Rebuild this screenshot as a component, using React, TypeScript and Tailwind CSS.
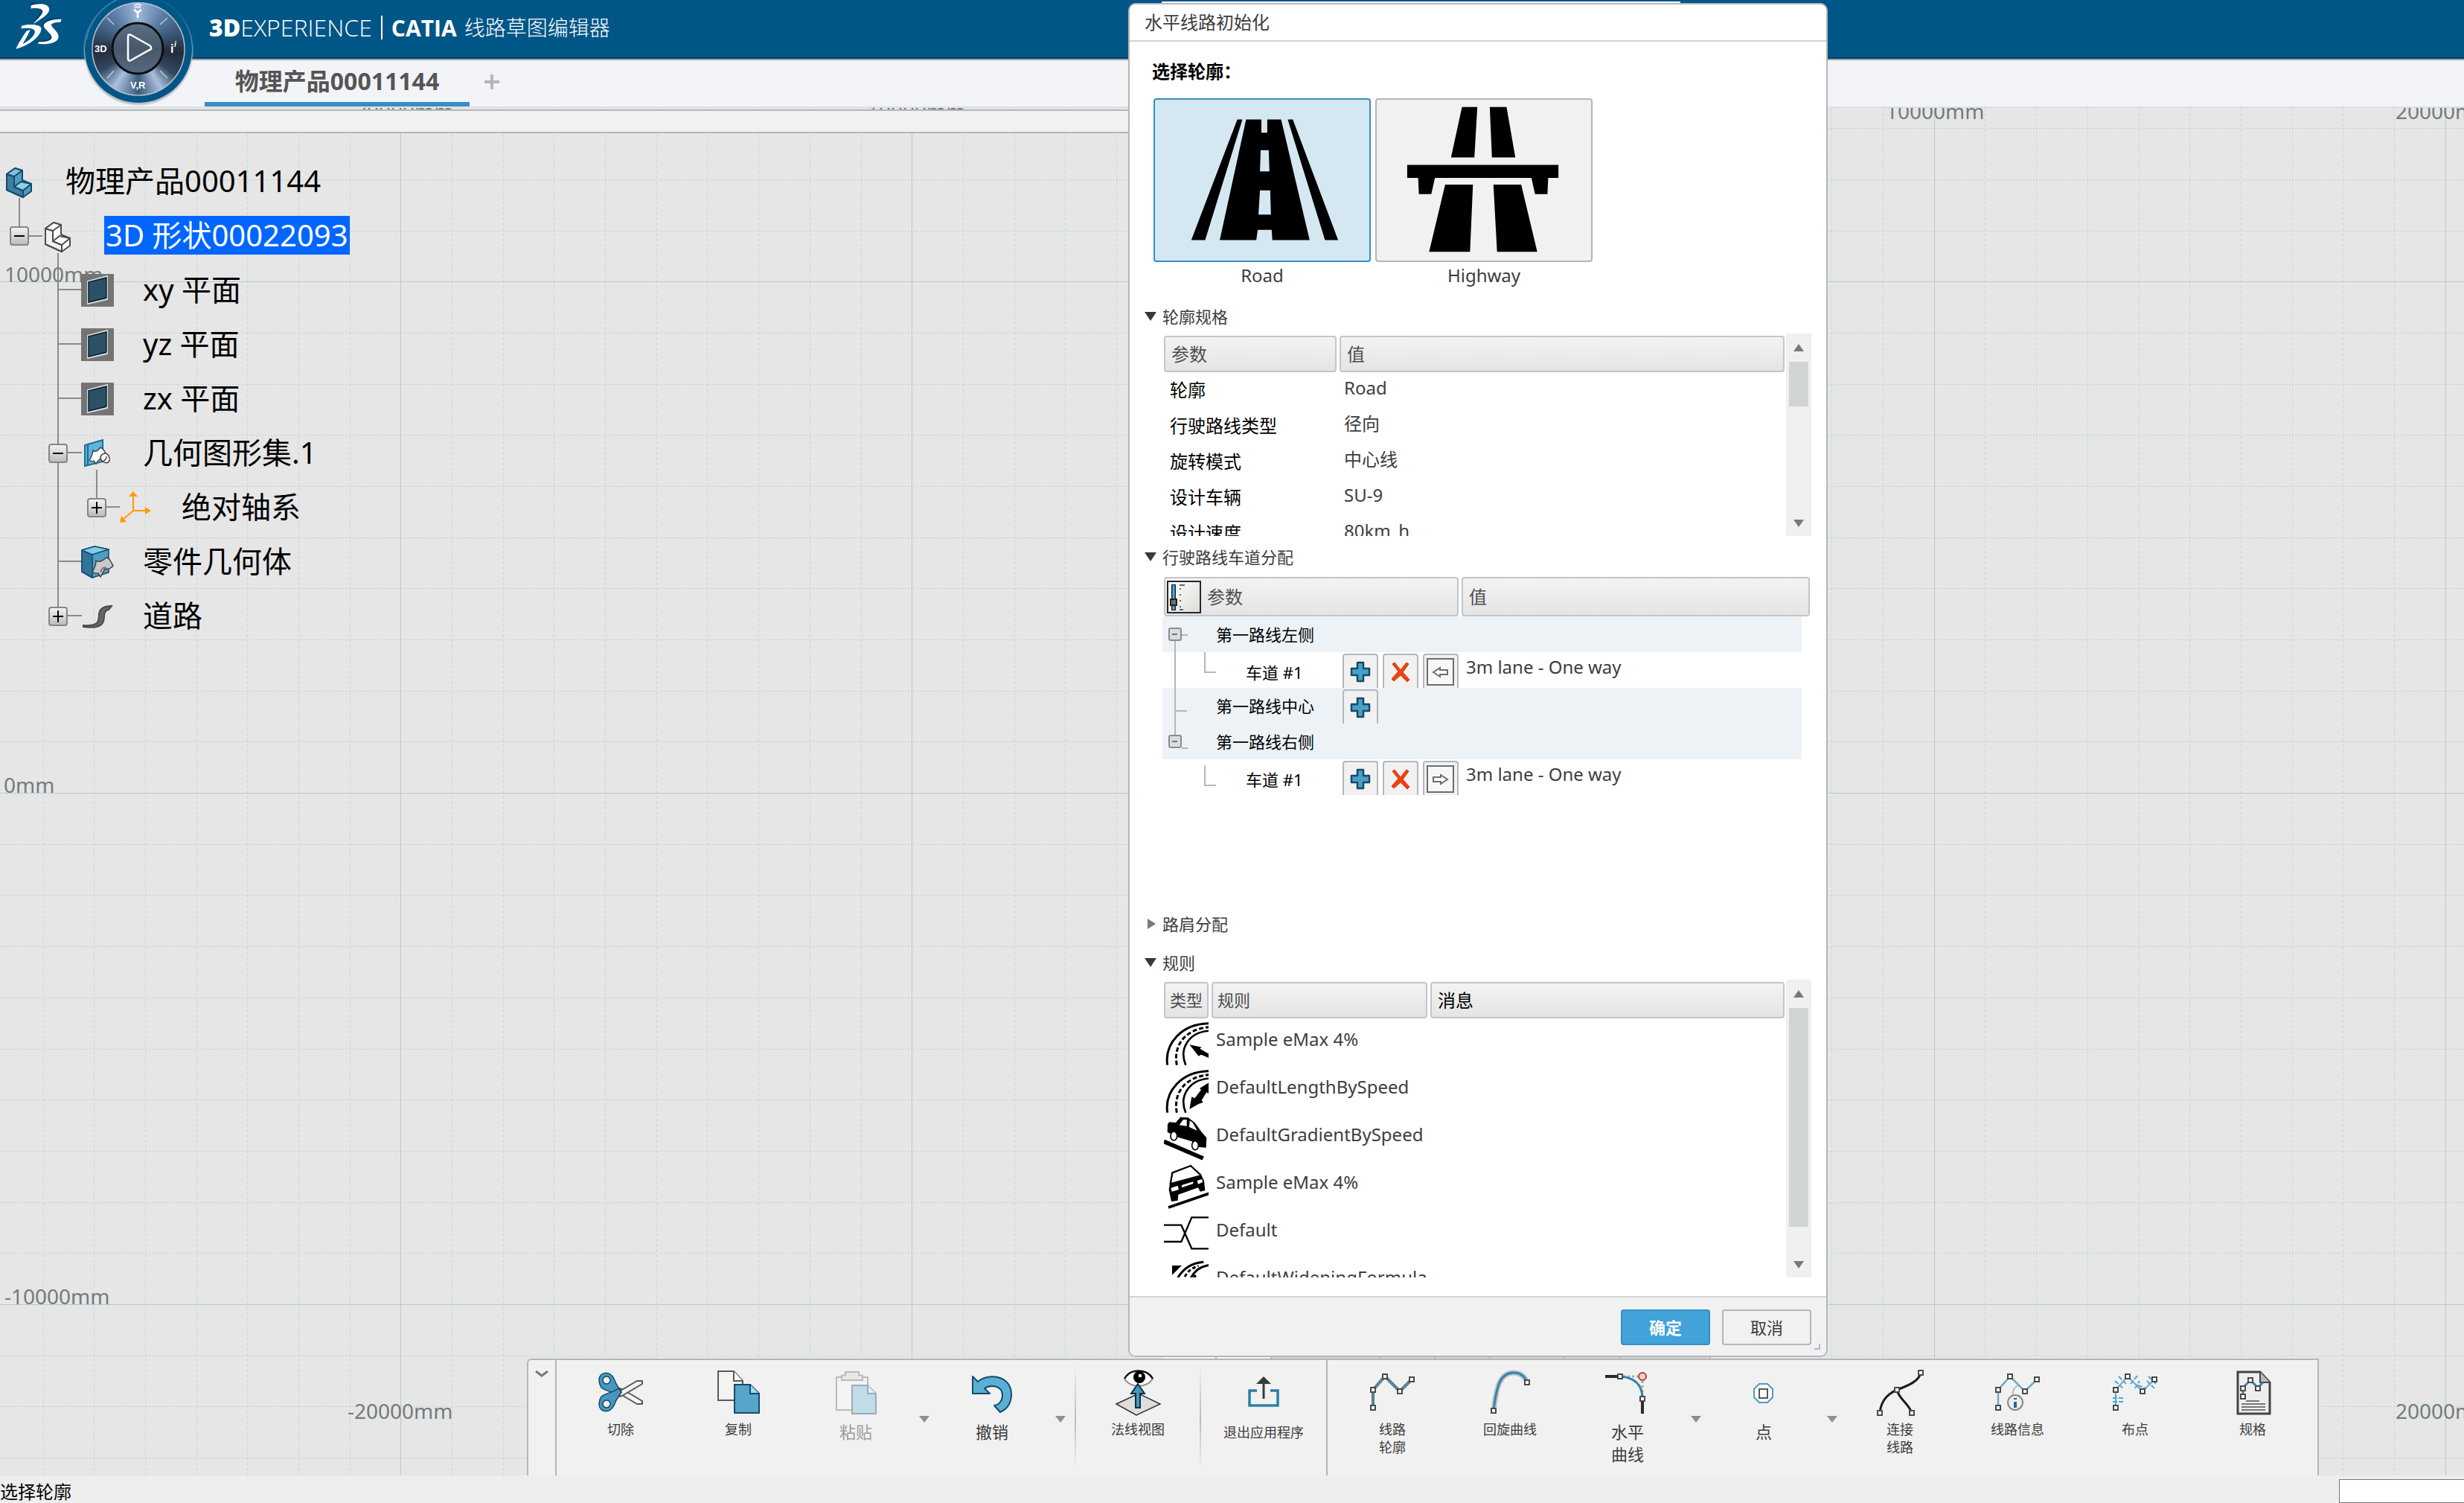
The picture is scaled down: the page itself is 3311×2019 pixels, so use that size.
import type { ReactNode } from "react";

const FONT = "font-['Noto_Sans','Noto_Sans_CJK_SC',sans-serif]";

/* ---------- Drawing sheet grid ---------- */

const GRID_STEP = 68.68;
const V_ORIGIN = 538.4;
const H_ORIGIN = 233.3;

function SheetGrid() {
  const vertical = Array.from({ length: 49 }, (_, i) => i - 7);
  const horizontal = Array.from({ length: 30 }, (_, i) => i - 3);
  const labels = [
    { x: 468, y: 15, t: "-20000mm" },
    { x: 1156, y: 15, t: "-10000mm" },
    { x: 2534, y: 15, t: "10000mm" },
    { x: 3219, y: 15, t: "20000mm" },
    { x: 6, y: 234, t: "10000mm" },
    { x: 5, y: 920, t: "0mm" },
    { x: 6, y: 1607, t: "-10000mm" },
    { x: 467, y: 1761, t: "-20000mm" },
    { x: 3219, y: 1761, t: "20000mm" },
  ];
  return (
    <svg className="absolute inset-0 h-full w-full" aria-hidden="true">
      <g shapeRendering="crispEdges" strokeWidth="1">
        {vertical.map((k) => {
          const x = Math.round(V_ORIGIN + k * GRID_STEP) + 0.5;
          const major = k % 10 === 0;
          return <line key={k} x1={x} x2={x} y1="0" y2="100%" stroke={major ? "#b7cad0" : "#c6d8da"} strokeDasharray={major ? undefined : "4 3"} />;
        })}
        {horizontal.map((k) => {
          const y = Math.round(H_ORIGIN + k * GRID_STEP) + 0.5;
          const major = k % 10 === 0;
          return <line key={k} x1="0" x2="100%" y1={y} y2={y} stroke={major ? "#b7cad0" : "#bcd2d5"} strokeDasharray={major ? undefined : "2 2"} />;
        })}
      </g>
      <g fill="#717c7d" fontSize="28" className={FONT}>
        {labels.map((l, i) => (
          <text key={i} x={l.x} y={l.y}>{l.t}</text>
        ))}
      </g>
    </svg>
  );
}

/* ---------- Header ---------- */

function DsLogo() {
  return (
    <svg viewBox="60 15 190 190" className="size-16" aria-label="Dassault Systèmes" role="img">
      <g fill="#00365a" transform="translate(-4 -4)">
        <path d="M124 25C150 16 192 14 197 38C200 60 160 82 133 98C150 78 174 60 170 46C166 35 145 35 124 37Z" />
        <path d="M245 80L243 91C225 92 212 95 204 101C212 120 236 130 234 152C230 177 180 182 151 177L155 170C180 171 206 166 207 153C207 136 178 122 175 107C175 88 215 79 245 80Z" />
      </g>
      <g fill="#fff">
        <path d="M124 25C150 16 192 14 197 38C200 60 160 82 133 98C150 78 174 60 170 46C166 35 145 35 124 37Z" />
        <path fillRule="evenodd" d="M87 106C115 98 162 100 165 116C167 145 120 184 64 198C74 176 92 146 107 126L122 122C112 142 99 166 91 179C116 166 140 145 140 129C138 116 113 113 85 117Z" />
        <path d="M245 80L243 91C225 92 212 95 204 101C212 120 236 130 234 152C230 177 180 182 151 177L155 170C180 171 206 166 207 153C207 136 178 122 175 107C175 88 215 79 245 80Z" />
      </g>
    </svg>
  );
}

function Compass() {
  return (
    <div className="absolute left-[105px] top-0 z-10 size-[160px] overflow-hidden">
      <div className="absolute left-[18px] top-[3px] size-[126px] rounded-full bg-[conic-gradient(from_0deg,#9db7d8,#5c7ea6_35deg,#3b5878_65deg,#232c3a_95deg,#33475f_125deg,#a9c0e0_150deg,#3c5a7c_180deg,#a9c0e0_212deg,#33475f_240deg,#232c3a_268deg,#3b5878_295deg,#5c7ea6_325deg,#9db7d8_360deg)] [box-shadow:0_0_0_9px_#005686,0_2px_2px_10px_#b9bcc0]" />
      <svg viewBox="0 0 160 160" className="absolute inset-0 size-full" aria-hidden="true">
        <defs>
          <linearGradient id="play" x1="0" y1="0" x2="0" y2="1">
            <stop offset="0" stopColor="#5b7086" />
            <stop offset=".5" stopColor="#47586a" />
            <stop offset="1" stopColor="#55697f" />
          </linearGradient>
        </defs>
        <path d="M11 54A71 71 0 0 1 52 0" fill="none" stroke="#2f7ba6" strokeWidth="2" />
        <circle cx="81" cy="66" r="62" fill="none" stroke="#aebfd2" strokeWidth="1.5" />
        <circle cx="80" cy="65" r="34" fill="url(#play)" stroke="#0b0e12" strokeWidth="3" />
        <path d="M67 49C67 46 69 46 71 47L96 61C99 63 99 66 96 67L71 81C69 82 67 82 67 79Z" fill="none" stroke="#fff" strokeWidth="2.5" />
        <g stroke="#c5d2e0" strokeWidth="1.3">
          <path d="M39 24L48 33M120 24L110 33M39 105L48 95M120 105L110 95" />
        </g>
        <g stroke="#fff" fill="none">
          <path d="M80 24V17L75 13M80 17L85 13" strokeWidth="2.5" />
          <path d="M76 11Q80 7 84 11M75 8Q80 3 85 8" strokeWidth="1.4" />
        </g>
        <g fill="#fff" fontWeight="700" className="font-['Liberation_Sans',sans-serif]">
          <text x="22" y="70" fontSize="13">3D</text>
          <text x="70" y="119" fontSize="13">V,R</text>
          <text x="124" y="71" fontSize="16">i</text>
          <text x="129" y="63" fontSize="10" fontStyle="italic">i</text>
        </g>
      </svg>
    </div>
  );
}

/* ---------- Specification tree ---------- */

const STEEL_DARK = "#174a68";

function StairIcon({ light = false }: { light?: boolean }) {
  const s = light ? "#4c4c4c" : STEEL_DARK;
  return (
    <svg viewBox="0 0 44 44" className="size-11" aria-hidden="true">
      <g stroke={s} strokeWidth="2" strokeLinejoin="round">
        <path d="M4 12L15 4L25 7V20L37 25V35L26 43L4 33Z" fill={light ? "#fff" : "#4f9cc0"} />
        <path d="M4 12L14 15V29L26 34V43L4 33Z" fill={light ? "#f1f1f1" : "#3a7fa5"} />
        <path d="M4 12L15 4L25 7L14 15Z" fill={light ? "#fff" : "#7cc3e2"} />
        <path d="M14 29L23 22L37 25L26 34Z" fill={light ? "#fff" : "#8dd0ec"} />
      </g>
    </svg>
  );
}

function PlaneIcon() {
  return (
    <svg viewBox="0 0 44 44" className="size-11" aria-hidden="true">
      <rect width="44" height="44" fill="#747474" />
      <path d="M9 10L35 3V34L9 40Z" fill="#2f5468" stroke="#d7dee2" strokeWidth="2" />
      <path d="M10 11L34 5V32L10 38Z" fill="#2c5166" stroke="#0d2230" strokeWidth="1.5" />
    </svg>
  );
}

function GeoSetIcon() {
  return (
    <svg viewBox="0 0 44 44" className="size-11" aria-hidden="true">
      <path d="M5 11L29 4V33L5 39Z" fill="#5db6dc" stroke="#1f6c92" strokeWidth="2" />
      <path d="M9 10V37" stroke="#1f6c92" strokeWidth="2" />
      <path d="M16 18Q20 22 26 14L30 17L33 22Q39 24 38 32Q35 37 29 33L26 29Q22 32 20 36L17 32Q14 34 11 31Q15 26 16 18Z" fill="#fff" stroke="#444" strokeWidth="1.5" />
      <path d="M26 29Q26 22 33 22M29 33Q34 31 34 26" fill="none" stroke="#444" strokeWidth="1.5" />
    </svg>
  );
}

function AxisIcon() {
  return (
    <svg viewBox="0 0 44 44" className="size-11" aria-hidden="true">
      <path d="M18 4V26H36M18 26L4 38" fill="none" stroke="#ff9b05" strokeWidth="2" />
      <path d="M12 7L18 0L24 7ZM34 21L42 26L34 31ZM2 33L9 41L0 42Z" fill="#ff9b05" />
    </svg>
  );
}

function BodyIcon() {
  return (
    <svg viewBox="0 0 44 44" className="size-11" aria-hidden="true">
      <g stroke={STEEL_DARK} strokeWidth="1.5" strokeLinejoin="round">
        <path d="M1 6L18 1L37 5V36L15 43L1 35Z" fill="#4f9dc3" />
        <path d="M1 6L15 12V43L1 35Z" fill="#317399" />
        <path d="M1 6L18 1L37 5L15 12Z" fill="#7fcbec" />
      </g>
      <path d="M20 20Q25 24 34 16L38 18L43 27Q38 33 32 31L26 42L23 37Q19 38 15 35Q20 28 20 20Z" fill="#c9c9c9" stroke="#444" strokeWidth="1.5" />
      <path d="M26 36Q28 28 34 30" fill="none" stroke="#777" strokeWidth="2" />
    </svg>
  );
}

function RoadIcon() {
  return (
    <svg viewBox="0 0 44 44" className="size-11" aria-hidden="true">
      <path d="M3 34Q15 35 21 31Q24 28 24 19Q25 8 41 8L37 13Q31 14 31 22Q31 32 24 35Q16 38 3 36Z" fill="#666" stroke="#4a4a4a" strokeWidth="2" />
    </svg>
  );
}

function Toggle({ open }: { open: boolean }) {
  return (
    <button type="button" aria-label={open ? "折叠" : "展开"} className="size-[26px] rounded-[4px] border-2 border-[#868686] bg-linear-to-b from-[#f2f2f2] to-[#bdbdbd]">
      <svg viewBox="0 0 22 22" className="size-full" aria-hidden="true">
        <path d={open ? "M4 11H18" : "M4 11H18M11 3V19"} stroke="#000" strokeWidth="2" />
      </svg>
    </button>
  );
}

type Node = { level: 0 | 1 | 2 | 3; label: string; icon: ReactNode; open?: boolean; selected?: boolean };

const nodes: Node[] = [
  { level: 0, label: "物理产品00011144", icon: <StairIcon /> },
  { level: 1, label: "3D 形状00022093", icon: <StairIcon light />, open: true, selected: true },
  { level: 2, label: "xy 平面", icon: <PlaneIcon /> },
  { level: 2, label: "yz 平面", icon: <PlaneIcon /> },
  { level: 2, label: "zx 平面", icon: <PlaneIcon /> },
  { level: 2, label: "几何图形集.1", icon: <GeoSetIcon />, open: true },
  { level: 3, label: "绝对轴系", icon: <AxisIcon />, open: false },
  { level: 2, label: "零件几何体", icon: <BodyIcon /> },
  { level: 2, label: "道路", icon: <RoadIcon />, open: false },
];

const INDENT = { 0: "pl-[5px]", 1: "pl-[13px]", 2: "pl-[65px]", 3: "pl-[117px]" };

function SpecTree() {
  return (
    <nav aria-label="结构树" className="relative mt-7 w-fit">
      <svg className="absolute left-0 top-0 h-full w-full" aria-hidden="true">
        <path
          d="M26 59V110H57M78 133V620M78 182H110M78 255H110M78 328H110M78 401H110M130 424V474H161M78 547H110M78 401V620H110"
          fill="none" stroke="#8a8a8a" strokeWidth="2" shapeRendering="crispEdges"
        />
      </svg>
      <ul className="relative">
        {nodes.map((n) => (
          <li key={n.label} className={`flex h-[73px] items-center ${INDENT[n.level]}`}>
            {n.level > 0 && <span className="flex w-11 shrink-0">{n.open !== undefined && <Toggle open={n.open} />}</span>}
            <span className="shrink-0">{n.icon}</span>
            <span className="pb-[2px] pl-[39px] text-[40px] leading-[52px]">
              <span className={n.selected ? "block bg-[#0066ff] px-[2px] text-white" : "block text-black"}>{n.label}</span>
            </span>
          </li>
        ))}
      </ul>
    </nav>
  );
}

/* ---------- Dialog parts ---------- */

function ScrollBar({ thumb }: { thumb: string }) {
  return (
    <div className="flex w-[34px] shrink-0 flex-col items-center bg-[#f0f0f0]" aria-hidden="true">
      <svg viewBox="0 0 14 10" className="my-[14px] h-[10px] w-[14px]"><path d="M7 0L14 10H0Z" fill="#77797c" /></svg>
      <div className={`w-[26px] bg-[#d1d4d4] ${thumb}`} />
      <svg viewBox="0 0 14 10" className="mt-auto mb-3 h-[10px] w-[14px]"><path d="M0 0H14L7 10Z" fill="#77797c" /></svg>
    </div>
  );
}

function SectionTitle({ children, open = true }: { children: ReactNode; open?: boolean }) {
  return (
    <button type="button" aria-expanded={open} className="flex h-11 w-full items-center pb-[2px] pl-5 text-left text-[22px] leading-[30px] text-[#3d3d3d]">
      <svg viewBox="0 0 16 14" className="mr-2 h-[14px] w-4" aria-hidden="true">
        {open ? <path d="M0 1H16L8 13Z" fill="#36393d" /> : <path d="M4 0L15 7L4 14Z" fill="#77797c" />}
      </svg>
      {children}
    </button>
  );
}

function HeadCell({ children, big = false, small = false, dark = false, colSpan }: { children: ReactNode; big?: boolean; small?: boolean; dark?: boolean; colSpan?: number }) {
  return (
    <th scope="col" colSpan={colSpan} className={`px-[2px] pt-[3px] pb-0 text-left font-normal ${big ? "h-14" : "h-[52px]"}`}>
      <div className={`flex items-center rounded-[4px] border-2 border-[#c4c5c8] bg-linear-to-b from-[#f3f3f3] to-[#e4e4e4] whitespace-nowrap ${big ? "h-[53px]" : "h-[49px]"} ${small ? "pl-[6px] text-[22px]" : "pl-2 text-[24px]"} ${dark ? "text-black" : "text-[#4d4d4d]"}`}>
        {children}
      </div>
    </th>
  );
}

function RoadPicture() {
  return (
    <svg viewBox="0 0 292 220" className="size-full" aria-hidden="true">
      <path d="M112 27H119L68 192H49ZM181 27H188L250 192H232Z" />
      <path fillRule="evenodd" d="M124 27H145V45H153V27H172L211 192H160L159 178H140L138 192H88ZM144 69L143 98H156L155 69ZM143 124L141 157H158L157 124Z" />
    </svg>
  );
}

function HighwayPicture() {
  return (
    <svg viewBox="0 0 292 220" className="size-full" aria-hidden="true">
      <path d="M116 10H137L133 79H101ZM154 10H177L189 79H157Z" />
      <path d="M41 89H248V107H234L233 129H216L211 107H79L74 129H57L56 107H41Z" />
      <path d="M93 116H131L127 208H71ZM159 116H197L219 208H164Z" />
    </svg>
  );
}

function ProfileCard({ label, selected = false, children }: { label: string; selected?: boolean; children: ReactNode }) {
  return (
    <label className="flex flex-col items-center text-[24px] leading-9 text-[#3d3d3d]">
      <button type="button" aria-pressed={selected} aria-label={label} className={`h-[220px] w-[292px] rounded-[4px] border-2 ${selected ? "border-[#368ec4] bg-[#d5e8f2]" : "border-[#b4b6ba] bg-[#f1f1f1]"}`}>
        {children}
      </button>
      {label}
    </label>
  );
}

const params = [
  ["轮廓", "Road"],
  ["行驶路线类型", "径向"],
  ["旋转模式", "中心线"],
  ["设计车辆", "SU-9"],
  ["设计速度", "80km_h"],
];

function ParamTable() {
  return (
    <div className="ml-11 mr-5 flex h-[272px] overflow-hidden">
      <table className="flex-1 table-fixed border-separate border-spacing-0 text-[24px] leading-9">
        <colgroup><col className="w-[236px]" /><col /></colgroup>
        <thead><tr><HeadCell>参数</HeadCell><HeadCell>值</HeadCell></tr></thead>
        <tbody>
          {params.map(([k, v]) => (
            <tr key={k}>
              <td className="h-12 p-0 pl-[10px] text-black">{k}</td>
              <td className="h-12 p-0 pb-[6px] pl-2 text-[#3d3d3d]">{v}</td>
            </tr>
          ))}
        </tbody>
      </table>
      <ScrollBar thumb="h-[60px]" />
    </div>
  );
}

function PlusGlyph() {
  return (
    <svg viewBox="0 0 44 44" className="size-11" aria-hidden="true">
      <path d="M18 10H26V18H34V27H26V35H18V27H10V18H18Z" fill="#4aa0c6" stroke={STEEL_DARK} strokeWidth="2.5" strokeLinejoin="round" />
    </svg>
  );
}

function CrossGlyph() {
  return (
    <svg viewBox="0 0 44 44" className="size-11" aria-hidden="true">
      <path d="M11 12L14 10L22 20L30 10L33 12L25 23L34 33L31 36L22 27L13 35L10 32L19 22Z" fill="#f0420e" stroke="#d8320a" strokeWidth="1" />
    </svg>
  );
}

function LaneArrow({ right = false }: { right?: boolean }) {
  return (
    <svg viewBox="0 0 44 44" className="size-11" aria-hidden="true">
      <rect x="4" y="5" width="35" height="35" fill="#f6f7f7" stroke="#6a6d71" strokeWidth="2" />
      <path d={right ? "M12 20H22V17L31 23L22 29V26H12Z" : "M31 20H21V17L12 23L21 29V26H31Z"} fill="#fff" stroke="#6a6d71" strokeWidth="2" />
    </svg>
  );
}

function LaneButton({ label, children }: { label: string; children: ReactNode }) {
  return (
    <button type="button" aria-label={label} className="flex h-[46px] w-12 justify-center rounded-t-[4px] border-2 border-b-0 border-[#b4b6ba] bg-[#f1f1f1]">
      {children}
    </button>
  );
}

type LaneRow = { label: string; lines: string; box?: boolean; add?: boolean; lane?: "left" | "right" };

const laneRows: LaneRow[] = [
  { label: "第一路线左侧", lines: "M17 33V48M26 25H34", box: true },
  { label: "车道 #1", lines: "M17 0V48M57 0V27H72", lane: "left" },
  { label: "第一路线中心", lines: "M17 0V48M17 31H33", add: true },
  { label: "第一路线右侧", lines: "M17 0V15M26 33H34", box: true },
  { label: "车道 #1", lines: "M57 8V35H72", lane: "right" },
];

function LaneTable() {
  return (
    <div className="ml-11 mr-5 mt-px h-[448px]">
      <table className="w-full table-fixed border-separate border-spacing-0">
        <colgroup><col className="w-[400px]" /><col /><col className="w-[13px]" /></colgroup>
        <thead>
          <tr>
            <HeadCell big>
              <button type="button" aria-label="滑块" className="-ml-[6px] mr-2 h-11 w-[46px] border-2 border-[#26282b] bg-linear-to-br from-white to-[#dcdcd8]">
                <svg viewBox="0 0 42 40" className="size-full" aria-hidden="true">
                  <path d="M7 3V38" stroke="#123" strokeWidth="6" /><path d="M7 4V37" stroke="#4db1de" strokeWidth="3" />
                  <rect x="3" y="23" width="8" height="8" fill="#6d6d6d" stroke="#222" strokeWidth="2" />
                  <path d="M16 8V35" stroke="#666" strokeWidth="2" strokeDasharray="2 6" />
                  <path d="M15 4H22M15 37H20" stroke="#666" strokeWidth="2" />
                </svg>
              </button>
              参数
            </HeadCell>
            <HeadCell big colSpan={2}>值</HeadCell>
          </tr>
        </thead>
        <tbody>
          {laneRows.map((r, i) => {
            const bg = r.lane ? "" : "bg-[#edf2f6]";
            return (
              <tr key={i}>
                <td className={`h-12 p-0 ${bg}`}>
                  <div className="flex h-12 items-center text-[22px] leading-8 text-black">
                    <svg viewBox="0 0 72 48" className="h-12 w-[72px] shrink-0" aria-hidden="true">
                      {r.box && <rect x="9" y="16" width="16" height="16" rx="2" fill="#dcdcde" stroke="#8a8c90" strokeWidth="2" />}
                      {r.box && <path d="M13 24H20" stroke="#777" strokeWidth="2" />}
                      <path d={r.lines} fill="none" stroke="#b4b6ba" strokeWidth="2" />
                    </svg>
                    <span className={r.lane ? "flex-1 pl-10 pt-[6px]" : "flex-1"}>{r.label}</span>
                    <div className="mr-[2px] flex h-full w-[156px] items-end gap-[6px]">
                      {(r.lane || r.add) && <LaneButton label="添加"><PlusGlyph /></LaneButton>}
                      {r.lane && <LaneButton label="删除"><CrossGlyph /></LaneButton>}
                      {r.lane && <LaneButton label="方向"><LaneArrow right={r.lane === "right"} /></LaneButton>}
                    </div>
                  </div>
                </td>
                <td className={`h-12 p-0 pb-2 pl-2 text-[24px] leading-9 text-[#3d3d3d] ${bg}`}>{r.lane && "3m lane - One way"}</td>
                <td className="p-0" />
              </tr>
            );
          })}
        </tbody>
      </table>
    </div>
  );
}

function CurvedRoad({ children }: { children?: ReactNode }) {
  return (
    <g fill="none" stroke="#000">
      <path d="M14 176C2 90 70 10 182 8" strokeWidth="9" />
      <path d="M88 176C60 110 100 44 182 38" strokeWidth="8" />
      <path d="M52 176C38 100 80 33 182 23" strokeWidth="9" strokeDasharray="18 9" />
      {children}
    </g>
  );
}

const ruleIcons: ReactNode[] = [
  <CurvedRoad><path d="M103 94L152 104L145 110L182 132V148L150 134L140 140Z" fill="#000" stroke="none" /></CurvedRoad>,
  <CurvedRoad><path d="M182 54V100L172 94L152 126L158 134L138 142L103 162L112 112L124 118L150 84L144 78Z" fill="#000" stroke="none" /></CurvedRoad>,
  <g>
    <path d="M15 30L22 22L48 24L66 2L98 4L125 25L152 62L172 85L170 125L138 122L113 100L53 82L14 62Z" />
    <path d="M62 34L78 12H92L92 38ZM104 16L116 24L134 56L102 42Z" fill="#fff" />
    <ellipse cx="40" cy="78" rx="13" ry="18" fill="#fff" stroke="#000" strokeWidth="5" />
    <ellipse cx="126" cy="116" rx="13" ry="18" fill="#fff" stroke="#000" strokeWidth="5" />
    <path d="M0 100L158 168" stroke="#000" strokeWidth="17" />
  </g>,
  <g>
    <path d="M26 80L34 34L108 6L150 45" fill="none" stroke="#000" strokeWidth="7" />
    <path d="M24 76L150 42L162 66L166 106L146 110L138 94L58 122L56 146L30 150L20 102Z" />
    <path d="M28 96L56 86L60 102L32 110ZM72 84L118 70L118 78L72 94ZM134 66L154 60L156 72L138 80Z" fill="#fff" />
    <path d="M18 174L182 118" stroke="#000" strokeWidth="11" />
  </g>,
  <path d="M0 53H70L112 148H182M0 120H70L112 22H182" fill="none" stroke="#000" strokeWidth="7" />,
  <g fill="none" stroke="#000" strokeWidth="9">
    <path d="M33 24H72L33 62Z" fill="#000" stroke="none" />
    <path d="M48 90C70 40 110 14 160 10M100 90C120 48 140 30 182 22" />
    <path d="M74 90C90 50 110 34 140 26" strokeDasharray="14 9" />
    <path d="M118 62H130V90H118Z" fill="#000" stroke="none" />
  </g>,
];

const rules = ["Sample eMax 4%", "DefaultLengthBySpeed", "DefaultGradientBySpeed", "Sample eMax 4%", "Default", "DefaultWideningFormula"];

function RulesTable() {
  return (
    <div className="ml-11 mr-5 flex h-[400px] overflow-hidden">
      <table className="flex-1 table-fixed border-separate border-spacing-0">
        <colgroup><col className="w-16" /><col className="w-[294px]" /><col /></colgroup>
        <thead><tr><HeadCell small>类型</HeadCell><HeadCell small>规则</HeadCell><HeadCell dark>消息</HeadCell></tr></thead>
        <tbody>
          {rules.map((r, i) => (
            <tr key={i}>
              <td className="h-16 p-0 pt-1 pl-[2px]">
                <svg viewBox="0 0 180 180" className="size-[60px]" aria-hidden="true">{ruleIcons[i]}</svg>
              </td>
              <td colSpan={2} className="h-16 p-0 pb-2 pl-2 text-[24px] leading-9 text-[#3d3d3d]">{r}</td>
            </tr>
          ))}
        </tbody>
      </table>
      <ScrollBar thumb="h-[294px]" />
    </div>
  );
}

function Dialog() {
  return (
    <section role="dialog" aria-label="水平线路初始化" className="absolute left-[1516px] top-1 z-30 flex w-[940px] flex-col overflow-hidden rounded-[10px] border-2 border-[#b4b6ba] bg-white">
      <h2 className="flex h-[50px] items-center border-b-2 border-[#d1d4d4] pl-5 text-[24px] leading-9 text-[#3d3d3d]">水平线路初始化</h2>
      <h3 className="mt-[22px] pl-[30px] text-[24px] font-bold leading-9 text-black">选择轮廓：</h3>
      <div className="mt-[18px] mb-4 flex gap-[6px] pl-8">
        <ProfileCard label="Road" selected><RoadPicture /></ProfileCard>
        <ProfileCard label="Highway"><HighwayPicture /></ProfileCard>
      </div>
      <SectionTitle>轮廓规格</SectionTitle>
      <ParamTable />
      <div className="h-[7px]" />
      <SectionTitle>行驶路线车道分配</SectionTitle>
      <LaneTable />
      <SectionTitle open={false}>路肩分配</SectionTitle>
      <div className="h-2" />
      <SectionTitle>规则</SectionTitle>
      <RulesTable />
      <footer className="relative mt-[25px] flex justify-end gap-4 border-t-2 border-[#d1d4d4] bg-[#f1f1f1] pt-4 pr-5 pb-[14px] text-[22px]">
        <button type="button" className="h-12 w-[120px] rounded-[4px] border-2 border-[#368ec4] bg-[#42a2da] font-bold text-white">确定</button>
        <button type="button" className="h-12 w-[120px] rounded-[4px] border-2 border-[#b4b6ba] bg-[#f1f1f1] text-[#3d3d3d]">取消</button>
        <span className="absolute right-2 bottom-2 size-2 border-r-2 border-b-2 border-[#b4b6ba]" />
      </footer>
    </section>
  );
}

/* ---------- Action bar ---------- */

function Icon({ children, faded = false }: { children: ReactNode; faded?: boolean }) {
  return (
    <svg viewBox="0 0 64 64" className={faded ? "size-16 opacity-40" : "size-16"} aria-hidden="true">
      {children}
    </svg>
  );
}

function Squares({ at }: { at: number[][] }) {
  return (
    <g fill="#fff" stroke="#4a4a4a" strokeWidth="2">
      {at.map(([x, y], i) => <rect key={i} x={x - 3} y={y - 3} width="6" height="6" />)}
    </g>
  );
}

const PROFILE = [[6, 52], [6, 28], [22, 10], [42, 30], [58, 14]];
const PROFILE_D = "M6 52V28L22 10L42 30L58 14";

const icons = {
  cut: (
    <Icon>
      <g fill="#f4f4f4" stroke="#555" strokeWidth="2" strokeLinejoin="round">
        <path d="M30 26L34 27L61 43V47H54L32 34Z" />
        <path d="M30 37L34 36L61 20V16H54L32 29Z" />
      </g>
      <g fill="#4796bd" stroke={STEEL_DARK} strokeWidth="1.5" fillRule="evenodd">
        <path d="M3 15C3 3 18 2 23 13C26 22 30 26 33 31L29 36C24 31 12 30 6 25C4 22 3 19 3 15ZM13 10A5 5 0 1 0 13.100 10Z" />
        <path d="M3 47C3 59 18 60 23 49C26 40 30 36 33 31L29 26C24 31 12 32 6 37C4 40 3 43 3 47ZM13 52A5 5 0 1 1 13.100 52Z" />
      </g>
    </Icon>
  ),
  copy: (
    <Icon>
      <path d="M5 3H26L38 16V42H5Z" fill="#f3f3f1" stroke="#5a5a5a" strokeWidth="2" />
      <path d="M26 3V16H38" fill="#fff" stroke="#5a5a5a" strokeWidth="2" />
      <path d="M27 21H48L60 33V59H27Z" fill="#57a5c9" stroke={STEEL_DARK} strokeWidth="2" />
      <path d="M48 21V33H60" fill="#a9dcf1" stroke={STEEL_DARK} strokeWidth="2" />
    </Icon>
  ),
  paste: (
    <Icon faded>
      <path d="M6 11H48V55H6Z" fill="#f7f7f5" stroke="#6a6a6a" strokeWidth="2" />
      <path d="M13 15V9L18 8V4H36V8L41 9V15Z" fill="#ddd" stroke="#6a6a6a" strokeWidth="2" />
      <path d="M27 22H48L59 33V60H27Z" fill="#7fbcd8" stroke={STEEL_DARK} strokeWidth="2" />
      <path d="M48 22V33H59" fill="#c9e8f5" stroke={STEEL_DARK} strokeWidth="2" />
    </Icon>
  ),
  undo: (
    <Icon>
      <path d="M6 10L13 17C26 5 58 8 58 34C58 46 52 54 43 58L35 49C42 48 46 42 46 35C46 23 31 20 22 26L29 33H6Z" fill="#5aafd4" stroke={STEEL_DARK} strokeWidth="2" strokeLinejoin="round" />
    </Icon>
  ),
  normal: (
    <Icon>
      <path d="M3 47L33 33L62 47L30 62Z" fill="#dedede" stroke="#333" strokeWidth="1.500" />
      <path d="M14 13C22 26 44 26 52 13" fill="#fff" stroke="#8a8a8a" strokeWidth="2" />
      <path d="M14 13C22 -1 44 -1 52 13" fill="#fff" stroke="#111" strokeWidth="2.500" />
      <circle cx="34" cy="11" r="8" fill="#000" /><rect x="33" y="7" width="4" height="4" fill="#fff" />
      <path d="M32 20L41 33H35V52H29V33H23Z" fill="#4b96bd" stroke="#06324c" strokeWidth="2" />
    </Icon>
  ),
  exit: (
    <Icon>
      <path d="M23 29H13V49H51V29H41" fill="none" stroke="#2d7ea6" strokeWidth="3.500" />
      <path d="M32 40V18" stroke="#3a3a3a" strokeWidth="3" /><path d="M32 10L42 20H22Z" fill="#3a3a3a" />
    </Icon>
  ),
  profile: (
    <Icon><path d={PROFILE_D} fill="none" stroke="#666" strokeWidth="4" /><path d={PROFILE_D} fill="none" stroke="#4596bd" strokeWidth="2" /><Squares at={PROFILE} /></Icon>
  ),
  clothoid: (
    <Icon>
      <path d="M10 56C14 20 20 5 37 5C47 5 52 10 55 18" fill="none" stroke="#c0c0c0" strokeWidth="7" />
      <path d="M10 56C14 20 20 5 37 5C47 5 52 10 55 18" fill="none" stroke="#2f86af" strokeWidth="3" />
      <Squares at={[[10, 56], [55, 18]]} />
    </Icon>
  ),
  curve: (
    <Icon>
      <path d="M2 10H20M52 42V60" stroke="#2a2a2a" strokeWidth="4" />
      <path d="M26 10H46M52 16V36" stroke="#aaa" strokeWidth="3" strokeDasharray="3 3" />
      <path d="M22 10Q52 12 52 40" fill="none" stroke="#2f86af" strokeWidth="3" />
      <circle cx="52" cy="10" r="5" fill="#e5d3d0" stroke="#b0402e" strokeWidth="2" />
      <Squares at={[[22, 10], [52, 40]]} />
    </Icon>
  ),
  point: (
    <Icon>
      <path d="M26 20H37L44 27V38L37 45H26L19 38V27Z" fill="#fff" stroke="#4b9cc2" strokeWidth="2" />
      <rect x="26" y="27" width="11" height="12" fill="#fff" stroke="#555" strokeWidth="2" />
    </Icon>
  ),
  connect: (
    <Icon>
      <path d="M5 60C6 44 14 34 28 28C44 22 58 16 60 5M28 28C30 40 46 48 48 60" fill="none" stroke="#1b1b1b" strokeWidth="3" />
      <Squares at={[[5, 59], [48, 59], [28, 28], [60, 5]]} />
    </Icon>
  ),
  info: (
    <Icon>
      <path d={PROFILE_D} fill="none" stroke="#6ea9c5" strokeWidth="2.500" />
      <path d="M32 22Q24 28 26 36" fill="none" stroke="#bbb" strokeWidth="2" />
      <circle cx="29" cy="45" r="10" fill="#eee" stroke="#888" strokeWidth="2" />
      <path d="M29 39V41M29 44V52" stroke="#1f6c92" strokeWidth="4" />
      <Squares at={PROFILE} />
    </Icon>
  ),
  stake: (
    <Icon>
      <path d={PROFILE_D} fill="none" stroke="#7fa9bb" strokeWidth="2" />
      <path d="M2 39H16M2 44H16M6 34V48M5 16L16 26M10 10L20 20M26 20L36 8M32 26L38 16M36 22L46 26M48 16L58 26M50 10L60 20" stroke="#47a9d8" strokeWidth="2" strokeDasharray="6 2" />
      <Squares at={PROFILE} />
    </Icon>
  ),
  spec: (
    <Icon>
      <path d="M12 4H42L55 18V60H12Z" fill="#eee" stroke="#444" strokeWidth="3" />
      <path d="M42 4V18H55" fill="#bbb" stroke="#444" strokeWidth="2" />
      <path d="M19 37V25L29 15L39 25L46 18" fill="none" stroke="#2f86af" strokeWidth="3" />
      <path d="M23 43H41M17 47H49M17 51H49M17 55H49" stroke="#777" strokeWidth="2" />
      <Squares at={[[19, 37], [19, 26], [29, 15], [39, 26]]} />
    </Icon>
  ),
};

function Action({ icon, lines, size = "small" }: { icon: ReactNode; lines: string[]; size?: "small" | "large" | "low" | "muted" }) {
  const tone = {
    small: "text-[18px] leading-6 text-[#3d3d3d]",
    low: "pt-1 text-[18px] leading-6 text-[#3d3d3d]",
    large: "text-[22px] leading-[30px] text-[#3d3d3d]",
    muted: "text-[22px] leading-[30px] text-[#9b9b9b]",
  }[size];
  return (
    <button type="button" disabled={size === "muted"} className="flex w-[158px] flex-col items-center pt-3">
      {icon}
      <span className={`mt-[5px] ${tone}`}>
        {lines.map((l) => <span key={l} className="block">{l}</span>)}
      </span>
    </button>
  );
}

function More() {
  return (
    <button type="button" aria-label="更多" className="flex w-[25px] justify-center pt-[75px]">
      <svg viewBox="0 0 14 9" className="h-[9px] w-[14px]" aria-hidden="true"><path d="M0 0H14L7 9Z" fill="#8f8f8f" /></svg>
    </button>
  );
}

function Separator() {
  return <div className="my-2 w-[2px] bg-linear-to-b from-transparent via-[#b9babd] to-transparent" />;
}

function ActionBar() {
  const tabs = ["w-[72px] bg-[#f4f5f7]", "w-[74px] bg-[#f4f5f7]", "w-[146px] bg-[#d3d5d9]", "w-[74px] bg-[#d3d5d9]", "w-[74px] bg-[#d3d5d9]", "w-[100px] bg-[#d3d5d9]", "w-[74px] bg-[#d3d5d9]", "w-[122px] bg-[#d3d5d9]"];
  return (
    <div className="absolute bottom-0 left-[708px] z-20">
      <div className="ml-[855px] flex h-1">
        {tabs.map((t, i) => <div key={i} className={`border-r-2 border-[#b4b6ba] ${t}`} />)}
      </div>
      <div className="flex h-[157px] rounded-tl-[6px] border-2 border-b-0 border-[#b4b6ba] bg-[#f1f1f1]">
        <button type="button" aria-label="收起" className="flex w-[38px] justify-center border-r-2 border-[#b4b6ba] pt-[14px]">
          <svg viewBox="0 0 18 10" className="h-[10px] w-[18px]" aria-hidden="true"><path d="M1 1L9 7L17 1" fill="none" stroke="#77797c" strokeWidth="3" /></svg>
        </button>
        <div className="flex px-[7px]">
          <Action icon={icons.cut} lines={["切除"]} />
          <Action icon={icons.copy} lines={["复制"]} />
          <Action icon={icons.paste} lines={["粘贴"]} size="muted" />
          <More />
          <Action icon={icons.undo} lines={["撤销"]} size="large" />
          <More />
        </div>
        <Separator />
        <div className="flex px-[4px]"><Action icon={icons.normal} lines={["法线视图"]} /></div>
        <Separator />
        <div className="flex border-r-2 border-[#b4b6ba] px-[5px]"><Action icon={icons.exit} lines={["退出应用程序"]} size="low" /></div>
        <div className="flex px-2">
          <Action icon={icons.profile} lines={["线路", "轮廓"]} />
          <Action icon={icons.clothoid} lines={["回旋曲线"]} />
          <Action icon={icons.curve} lines={["水平", "曲线"]} size="large" />
          <More />
          <Action icon={icons.point} lines={["点"]} size="large" />
          <More />
          <Action icon={icons.connect} lines={["连接", "线路"]} />
          <Action icon={icons.info} lines={["线路信息"]} />
          <Action icon={icons.stake} lines={["布点"]} />
          <Action icon={icons.spec} lines={["规格"]} />
        </div>
      </div>
    </div>
  );
}

/* ---------- Page ---------- */

export default function App() {
  return (
    <div className={`relative flex h-screen flex-col overflow-hidden bg-[#e6e6e6] ${FONT}`}>
      <header className="flex h-[81px] shrink-0 items-start border-b-2 border-[#a3a6ab] bg-[#005686] [box-shadow:inset_0_-2px_0_#00416a]">
        <div className="flex w-[281px] pl-5 pt-1"><DsLogo /></div>
        <h1 className="flex h-[74px] items-center text-white">
          <span className="font-['Open_Sans',sans-serif] text-[32px] font-light"><b className="font-extrabold">3D</b>EXPERIENCE</span>
          <span className="mx-3 h-8 w-[2px] bg-white" />
          <span className="font-['Open_Sans',sans-serif] text-[30px] font-bold">CATIA</span>
          <span className="ml-[10px] text-[28px] font-light">线路草图编辑器</span>
        </h1>
      </header>
      <Compass />
      <div className="flex h-16 shrink-0 border-b-2 border-[#dfe0e4] bg-[#f3f4f7]">
        <a href="#product" className="ml-[275px] flex w-[356px] items-center justify-center border-b-[6px] border-[#368ec4] text-[32px] font-bold leading-10 text-[#555]">
          物理产品00011144
        </a>
        <button type="button" aria-label="新建标签" className="ml-5 flex items-center pb-1">
          <svg viewBox="0 0 20 20" className="size-5" aria-hidden="true"><path d="M0 10H20M10 0V20" stroke="#b4b6ba" strokeWidth="4" /></svg>
        </button>
      </div>
      <main className="relative flex-1 overflow-hidden">
        <SheetGrid />
        <div className="relative mt-[2px] h-8 w-[1530px] border-y-2 border-[#b4b6ba] bg-[#f1f1f1]" />
        <SpecTree />
        <ActionBar />
      </main>
      <footer className="flex h-[37px] shrink-0 items-end justify-between bg-[#eee] text-[24px] text-black">
        <span className="leading-[30px]">选择轮廓</span>
        <input aria-label="命令输入" className="h-8 w-[168px] border border-r-0 border-[#777] bg-white px-2 text-[20px]" />
      </footer>
      <div className="absolute left-[1561px] top-[2px] z-20 h-1 w-[697px] bg-white" />
      <Dialog />
    </div>
  );
}
